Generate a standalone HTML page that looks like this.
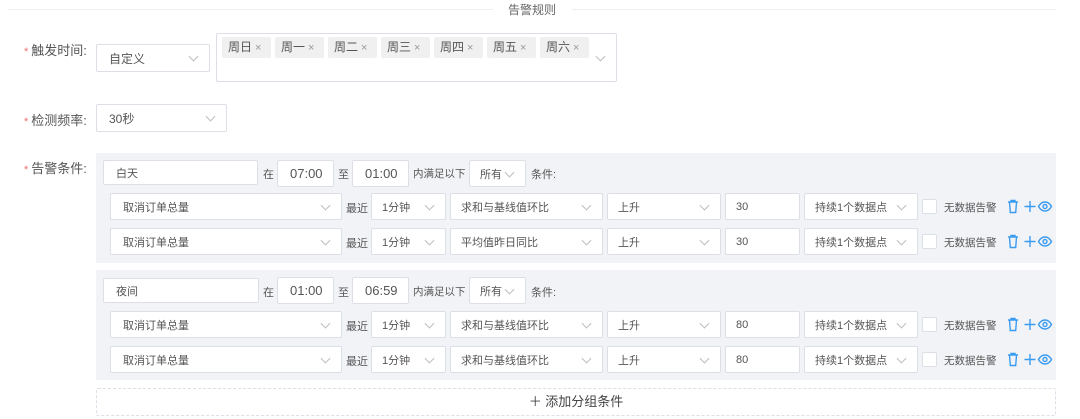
<!DOCTYPE html>
<html><head><meta charset="utf-8"><style>
*{box-sizing:border-box;margin:0;padding:0}
body{width:1080px;height:419px;background:#fff;position:relative;overflow:hidden;font-family:"Liberation Sans","Noto Sans CJK SC",sans-serif;color:#555;font-size:12px}
.a{position:absolute}
.box{position:absolute;background:#fff;border:1px solid #dcdfe6;border-radius:2px;font-size:11px;color:#555;padding-left:12px;display:flex;align-items:center}
.sel::after{content:"";position:absolute;right:12px;top:50%;width:6px;height:6px;border-right:1px solid #bbb;border-bottom:1px solid #bbb;transform:translateY(-70%) rotate(45deg)}
.lbl{position:absolute;font-size:13px;color:#555}
.lbl b{color:#f56c6c;font-weight:normal;font-size:11px;margin-right:3px}
.t{position:absolute;font-size:11px;color:#555}
.panel{position:absolute;left:96px;width:960px;height:110px;background:#f2f3f7}
.tag{position:absolute;top:37px;height:21px;background:#f0f0f0;border-radius:2px;font-size:12px;color:#555;padding-left:6px;line-height:21px;width:49px}
.tag i{font-style:normal;color:#999;font-size:11px;margin-left:3px}
.cb{position:absolute;width:15px;height:15px;background:#fff;border:1px solid #dcdfe6;border-radius:2px}
.ic{position:absolute}
</style></head><body>
<div class="a" style="left:8px;top:9px;width:485px;height:1px;background:#eceef2"></div>
<div class="a" style="left:572px;top:9px;width:484px;height:1px;background:#eceef2"></div>
<div class="t" style="left:508px;top:1px;font-size:12px;color:#666">告警规则</div>

<div class="lbl" style="left:24px;top:40px"><b>*</b>触发时间:</div>
<div class="box sel" style="left:96px;top:44px;width:114px;height:28px;font-size:12px">自定义</div>
<div class="box sel" style="left:216px;top:33px;width:401px;height:49px"></div>
<div class="tag" style="left:222px">周日<i>×</i></div>
<div class="tag" style="left:275px">周一<i>×</i></div>
<div class="tag" style="left:328px">周二<i>×</i></div>
<div class="tag" style="left:381px">周三<i>×</i></div>
<div class="tag" style="left:434px">周四<i>×</i></div>
<div class="tag" style="left:487px">周五<i>×</i></div>
<div class="tag" style="left:540px">周六<i>×</i></div>

<div class="lbl" style="left:24px;top:110px"><b>*</b>检测频率:</div>
<div class="box sel" style="left:96px;top:104px;width:131px;height:28px;font-size:12px">30秒</div>

<div class="lbl" style="left:24px;top:158px"><b>*</b>告警条件:</div>

<div class="panel" style="top:153px"></div>
<div class="panel" style="top:270px"></div>

<!-- group 1 -->
<div class="box" style="left:103px;top:160px;width:155px;height:25px">白天</div>
<div class="t" style="left:263px;top:166px">在</div>
<div class="box" style="left:277px;top:160px;width:57px;height:27px;font-size:13px">07:00</div>
<div class="t" style="left:338px;top:166px">至</div>
<div class="box" style="left:352px;top:160px;width:57px;height:27px;font-size:13px">01:00</div>
<div class="t" style="left:413px;top:166px;font-size:10.5px">内满足以下</div>
<div class="box sel" style="left:469px;top:160px;width:57px;height:27px;padding-left:10px">所有</div>
<div class="t" style="left:531px;top:166px">条件:</div>

<!-- group 2 -->
<div class="box" style="left:103px;top:278px;width:156px;height:25px">夜间</div>
<div class="t" style="left:263px;top:284px">在</div>
<div class="box" style="left:277px;top:277px;width:57px;height:27px;font-size:13px">01:00</div>
<div class="t" style="left:338px;top:284px">至</div>
<div class="box" style="left:352px;top:277px;width:57px;height:27px;font-size:13px">06:59</div>
<div class="t" style="left:413px;top:284px;font-size:10.5px">内满足以下</div>
<div class="box sel" style="left:469px;top:277px;width:57px;height:27px;padding-left:10px">所有</div>
<div class="t" style="left:531px;top:284px">条件:</div>

<!-- condition rows -->
<div id="rows"></div>
<script>
var rows=[[193,"求和与基线值环比","30"],[228,"平均值昨日同比","30"],[311,"求和与基线值环比","80"],[346,"求和与基线值环比","80"]];
var h="";
rows.forEach(function(r){var y=r[0];
h+='<div class="box sel" style="left:110px;top:'+y+'px;width:232px;height:27px">取消订单总量</div>';
h+='<div class="t" style="left:346px;top:'+(y+7)+'px">最近</div>';
h+='<div class="box sel" style="left:371px;top:'+y+'px;width:75px;height:27px;padding-left:10px">1分钟</div>';
h+='<div class="box sel" style="left:450px;top:'+y+'px;width:153px;height:27px;padding-left:10px">'+r[1]+'</div>';
h+='<div class="box sel" style="left:607px;top:'+y+'px;width:114px;height:27px;padding-left:10px">上升</div>';
h+='<div class="box" style="left:725px;top:'+y+'px;width:75px;height:27px;padding-left:10px">'+r[2]+'</div>';
h+='<div class="box sel" style="left:804px;top:'+y+'px;width:114px;height:27px;padding-left:10px">持续1个数据点</div>';
h+='<div class="cb" style="left:922px;top:'+(y+6)+'px"></div>';
h+='<div class="t" style="left:944px;top:'+(y+7)+'px;font-size:10.5px">无数据告警</div>';
h+='<svg class="ic" style="left:1007px;top:'+(y+6)+'px" width="46" height="15" viewBox="0 0 46 15" fill="none" stroke="#3a9cf0" stroke-width="1.4"><path d="M1 3h10M4 3V1.5h4V3M2.5 3l.8 10.5h5.4L9.5 3"/><path d="M23 2v11M17.5 7.5h11"/><path d="M31.5 7.5C33.5 4 36 3 38 3s4.5 1 6.5 4.5C42.5 11 40 12 38 12s-4.5-1-6.5-4.5z"/><circle cx="38" cy="7.5" r="2"/></svg>';
});
document.getElementById("rows").innerHTML=h;
</script>

<div class="a" style="left:96px;top:388px;width:960px;height:28px;border:1px dashed #dcdfe6;border-radius:2px;background:#fff;text-align:center;line-height:26px;font-size:13px;color:#444">＋ 添加分组条件</div>
</body></html>
